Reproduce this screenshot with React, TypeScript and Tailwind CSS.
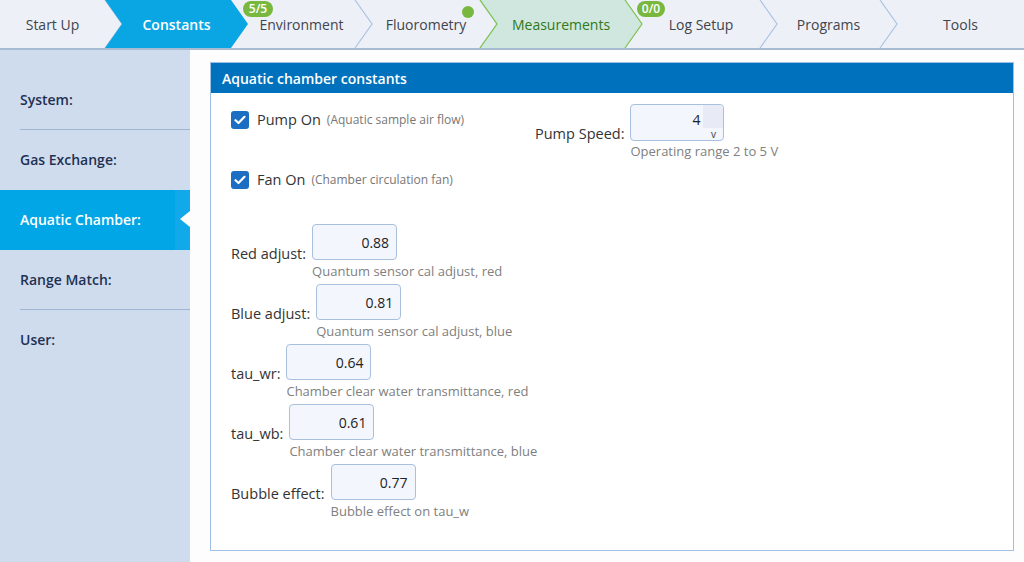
import React from "react";

type Tab = {
  label: string;
  w: string;
  width: number;
  state?: "active" | "good";
  first?: boolean;
};

const tabs: Tab[] = [
  { label: "Start Up", w: "w-[105px]", width: 105, first: true },
  { label: "Constants", w: "w-[126px]", width: 126, state: "active" },
  { label: "Environment", w: "w-[124px]", width: 124 },
  { label: "Fluorometry", w: "w-[125px]", width: 125 },
  { label: "Measurements", w: "w-[145px]", width: 145, state: "good" },
  { label: "Log Setup", w: "w-[135px]", width: 135 },
  { label: "Programs", w: "w-[120px]", width: 120 },
  { label: "Tools", w: "w-[144px]", width: 144 },
];

const TabShape: React.FC<{ tab: Tab }> = ({ tab }) => {
  const w = tab.width;
  const fillPts = tab.first
    ? `0,0 ${w},0 ${w + 17},24 ${w},48 0,48`
    : `0,0 ${w},0 ${w + 17},24 ${w},48 0,48 17,24`;
  return (
    <svg
      className="absolute left-0 top-0 h-[48px] pointer-events-none overflow-visible"
      width={w + 17}
      height={48}
    >
      {tab.state === "active" && <polygon points={fillPts} fill="#0aa6e4" />}
      {tab.state === "good" && (
        <>
          <polygon points={fillPts} fill="#cfe7df" />
          <polyline points="0,0 17,24 0,48" fill="none" stroke="#7dc24a" strokeWidth="1.2" />
          <polyline points={`${w},0 ${w + 17},24 ${w},48`} fill="none" stroke="#7dc24a" strokeWidth="1.2" />
        </>
      )}
      {!tab.state && tab.label !== "Tools" && (
        <polyline points={`${w},0 ${w + 17},24 ${w},48`} fill="none" stroke="#a9c4e2" strokeWidth="1.2" />
      )}
    </svg>
  );
};

const TopBar: React.FC = () => (
  <div className="flex h-[50px] bg-[#eef0f8] border-b-2 border-[#a7bbd3]">
    {tabs.map((t) => (
      <div key={t.label} className={`relative h-[48px] shrink-0 ${t.w}`}>
        <TabShape tab={t} />
        <div
          className={`relative flex h-full items-center justify-center text-[14px] ${
            t.first ? "" : "pl-[17px]"
          } ${
            t.state === "active"
              ? "text-white font-semibold"
              : t.state === "good"
              ? "text-[#2f7a18] font-medium"
              : "text-[#40454c]"
          }`}
        >
          {t.label}
        </div>
        {t.label === "Environment" && (
          <span className="absolute left-[12px] top-[1px] flex h-[16px] w-[30px] items-center justify-center rounded-full bg-[#79b83f] text-[12px] font-semibold text-white leading-none">
            5/5
          </span>
        )}
        {t.label === "Log Setup" && (
          <span className="absolute left-[12px] top-[1px] flex h-[16px] w-[28px] items-center justify-center rounded-full bg-[#79b83f] text-[12px] font-semibold text-white leading-none">
            0/0
          </span>
        )}
        {t.label === "Fluorometry" && (
          <span className="absolute left-[107px] top-[6px] h-[12px] w-[12px] rounded-full bg-[#79b83f]" />
        )}
      </div>
    ))}
  </div>
);

const sideItems = ["System:", "Gas Exchange:", "Aquatic Chamber:", "Range Match:", "User:"];

const Sidebar: React.FC = () => (
  <div className="w-[190px] shrink-0 bg-[#cfdcee] pt-[20px]">
    {sideItems.map((s, i) => {
      const active = s === "Aquatic Chamber:";
      const divider = i === 0 || i === 3;
      return (
        <div key={s} className="relative">
          <div
            className={`flex h-[60px] items-center pl-5 pb-[2px] text-[14px] font-semibold ${
              active ? "bg-[#00a6e6] text-white" : "text-[#1f3152]"
            }`}
          >
            {s}
          </div>
          {active && (
            <>
              <div className="absolute right-0 top-0 h-[60px] w-[15px] bg-[#12a9ea]" />
              <div className="absolute right-0 top-[21px] h-0 w-0 border-y-[8px] border-r-[10px] border-y-transparent border-r-white" />
            </>
          )}
          {divider && <div className="absolute bottom-0 left-5 right-0 h-px bg-[#9fb4d0]" />}
        </div>
      );
    })}
  </div>
);

const Check: React.FC = () => (
  <span className="flex h-[18px] w-[18px] items-center justify-center rounded-[3px] bg-[#1b6ec2]">
    <svg width="12" height="10" viewBox="0 0 12 10">
      <path d="M1.5 5.2 L4.5 8 L10.5 1.8" fill="none" stroke="white" strokeWidth="2.2" strokeLinecap="round" strokeLinejoin="round" />
    </svg>
  </span>
);

const fields = [
  { label: "Red adjust:", value: "0.88", help: "Quantum sensor cal adjust, red" },
  { label: "Blue adjust:", value: "0.81", help: "Quantum sensor cal adjust, blue" },
  { label: "tau_wr:", value: "0.64", help: "Chamber clear water transmittance, red" },
  { label: "tau_wb:", value: "0.61", help: "Chamber clear water transmittance, blue" },
  { label: "Bubble effect:", value: "0.77", help: "Bubble effect on tau_w" },
];

const Panel: React.FC = () => (
  <div className="flex-1 bg-[#fdfdfd] pt-[12px] pb-[11px] pl-5 pr-[10px]">
    <div className="flex h-full flex-col border border-[#9dc0e3] bg-white">
      <div className="flex h-[30px] items-center bg-[#0071bc] pl-[11px] text-[14px] font-semibold text-white">
        Aquatic chamber constants
      </div>
      <div className="pl-5 pt-[18px]">
        <div className="flex">
          <div className="w-[304px]">
            <div className="flex h-[18px] items-center">
              <Check />
              <span className="ml-2 text-[14.5px] text-[#333]">Pump On</span>
              <span className="ml-[6px] text-[12px] text-[#777]">(Aquatic sample air flow)</span>
            </div>
            <div className="mt-[42px] flex h-[18px] items-center">
              <Check />
              <span className="ml-2 text-[14.5px] text-[#333]">Fan On</span>
              <span className="ml-[6px] text-[12px] text-[#777]">(Chamber circulation fan)</span>
            </div>
          </div>
          <div className="-mt-[7px] flex items-start">
            <span className="mt-[20px] mr-[6px] text-[14.5px] leading-5 text-[#333]">Pump Speed:</span>
            <div>
              <div className="flex h-[37px] w-[94px] rounded-[4px] border border-[#a8c0dc] bg-[#f4f6fe]">
                <div className="flex-1 pt-[4px] pr-[3px] text-right text-[14px] text-[#222]">4</div>
                <div className="flex w-[20px] flex-col">
                  <div className="h-[23px] rounded-tr-[4px] bg-[#e8eaf5]" />
                  <div className="text-center text-[10px] leading-[12px] text-[#333]">v</div>
                </div>
              </div>
              <div className="mt-[2px] text-[13px] leading-4 text-[#808080]">Operating range 2 to 5 V</div>
            </div>
          </div>
        </div>
        <div className="mt-[35px] flex flex-col gap-[5px]">
          {fields.map((f) => (
            <div key={f.label} className="flex items-start">
              <span className="mt-5 mr-[6px] text-[14.5px] leading-5 text-[#333]">{f.label}</span>
              <div>
                <div className="flex h-[36px] w-[85px] items-center justify-end rounded-[4px] border border-[#a8c0dc] bg-[#f4f6fe] pr-[7px] text-[14px] text-[#222]">
                  {f.value}
                </div>
                <div className="mt-[3px] text-[13px] leading-4 text-[#808080]">{f.help}</div>
              </div>
            </div>
          ))}
        </div>
      </div>
    </div>
  </div>
);

const App: React.FC = () => (
  <div className="flex h-[562px] w-[1024px] flex-col overflow-hidden font-['Open_Sans',sans-serif]">
    <TopBar />
    <div className="flex flex-1">
      <Sidebar />
      <Panel />
    </div>
  </div>
);

export default App;
